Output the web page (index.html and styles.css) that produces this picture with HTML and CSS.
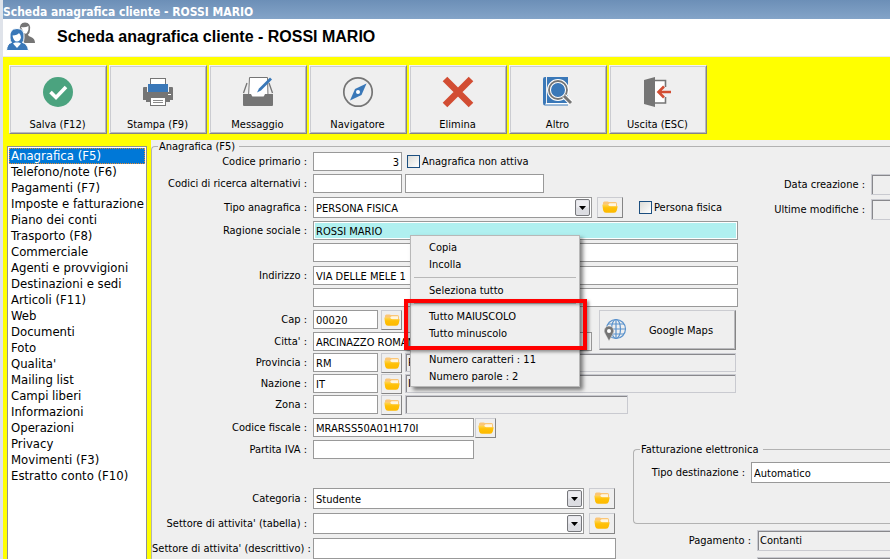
FILE: index.html
```html
<!DOCTYPE html>
<html lang="it">
<head>
    <meta charset="UTF-8">
    <title>Scheda anagrafica cliente</title>

    <link rel="stylesheet" href="styles.css">
</head>
<body>

<svg class="defs" aria-hidden="true">
    <defs>
        <linearGradient id="gold" x1="0" y1="0" x2="0" y2="1">
            <stop offset="0" stop-color="#ffd65a"/>
            <stop offset="0.4" stop-color="#ffc107"/>
            <stop offset="1" stop-color="#fdb900"/>
        </linearGradient>
        <symbol id="folder" viewBox="0 0 16 12">
            <path d="M1 5 V2 Q1 0.5 2.500 0.5 H5.500 L7 1 H13.500 Q15 1 15 3 V6 H1 Z" fill="#fbc676"/>
            <path d="M6 4 L7.500 2.200 H14 V5.500 H7 Z" fill="#fff6e0"/>
            <path d="M0.3 3.500 H5.500 Q7 5.200 8.500 5.200 H15.700 L14.800 9.500 Q14.200 11.800 12 11.800 H4 Q1.800 11.800 1.200 9.500 Z" fill="url(#gold)"/>
        </symbol>
    </defs>
</svg>

<div class="window">
    <div class="titlebar">Scheda anagrafica cliente - ROSSI MARIO</div>

    <header class="header">
        <svg class="header-icon" width="32" height="32" viewBox="0 0 32 32">
            <path d="M14 9 Q13 1.500 19 1.500 Q25 1.500 24 9 Q24 12 22 13.500 Q22 15 25 16 Q29 17.500 29 22 H18 Z" fill="#757575"/>
            <path d="M15 6 Q19 7 22.500 5 Q23 9 21 12 Q19.500 13.500 18 12 Q16 8 15 6 Z" fill="#fff"/>
            <path d="M4 17 Q3 7.500 11 7.500 Q19 7.500 18 17 Q18 20 16.500 21.500 Q21.500 22.500 22.500 29.500 H0.5 Q1 22.500 5.500 21.500 Q4 20 4 17 Z" fill="#3a78b8" stroke="#fff"/>
            <path d="M6.500 14.500 Q11.500 14 13 12 Q15 14 15 16.500 Q14 20.500 11 20.500 Q7.500 20.500 6.500 14.500 Z" fill="#fff"/>
            <path d="M7 22.500 L11 27 L15 22.500 L13 21.500 H9 Z" fill="#fff"/>
        </svg>
        <h1>Scheda anagrafica cliente - ROSSI MARIO</h1>
    </header>

    <div class="toolbar">
        <button type="button" class="tool">
            <svg width="32" height="32" viewBox="0 0 32 32">
                <circle cx="16" cy="16" r="15" fill="#4ba37f"/>
                <path d="M8.500 16 L14 21.500 L24 11" fill="none" stroke="#fff" stroke-width="3.600"/>
            </svg>
            Salva (F12)
        </button>
        <button type="button" class="tool">
            <svg width="32" height="32" viewBox="0 0 32 32">
                <path d="M1 12 Q1 11 2 11 H5 V16 H27 V11 H30 Q31 11 31 12 V24 H1 Z" fill="#757575"/>
                <path d="M4 24 H28 V26 H4 Z" fill="#757575"/>
                <rect x="8.500" y="2.500" width="15" height="7" fill="#fff" stroke="#757575"/>
                <rect x="6" y="8" width="20" height="8" fill="#3a78b8"/>
                <rect x="8.500" y="21.500" width="15" height="8" fill="#fff" stroke="#757575"/>
                <path d="M11 24.500 H21 M11 26.500 H21" stroke="#8a8a8a"/>
                <path d="M26 18.500 H29" stroke="#fff"/>
            </svg>
            Stampa (F9)
        </button>
        <button type="button" class="tool">
            <svg width="32" height="32" viewBox="0 0 32 32">
                <path d="M5 7 L1.500 17 M27 7 L30.500 17" stroke="#757575" stroke-width="1.300"/>
                <path d="M7.500 1.500 H25.500 L26 21 H6.500 Z" fill="#fff" stroke="#757575"/>
                <path d="M1 18 H9 L10.500 21 H21.500 L23 18 H31 V29 Q31 30 30 30 H2 Q1 30 1 29 Z" fill="#757575"/>
                <path d="M15 16.500 L17 12.500 L28 1.500 L30 3.500 L19 14.500 Z" fill="#3a78b8"/>
            </svg>
            Messaggio
        </button>
        <button type="button" class="tool">
            <svg width="32" height="32" viewBox="0 0 32 32">
                <circle cx="16" cy="16" r="14.200" fill="none" stroke="#757575" stroke-width="1.700"/>
                <path d="M24.500 7.500 L19.500 19 L8 24.500 L13 13 Z" fill="#3a78b8"/>
                <circle cx="16" cy="16" r="2" fill="#fff"/>
            </svg>
            Navigatore
        </button>
        <button type="button" class="tool">
            <svg width="32" height="32" viewBox="0 0 32 32">
                <path d="M3 3 L29 29 M29 3 L3 29" stroke="#d24d33" stroke-width="6.500"/>
            </svg>
            Elimina
        </button>
        <button type="button" class="tool">
            <svg width="32" height="32" viewBox="0 0 32 32">
                <path d="M1 3 Q1 1 3 1 H4 V27 H26 V29.500 H3 Q1 29.500 1 27 Z" fill="#3a78b8"/>
                <path d="M4 27 H26 V28.500 H3 Z" fill="#fff"/>
                <rect x="5" y="1" width="21" height="26" fill="#3a78b8"/>
                <circle cx="16" cy="14" r="9" fill="none" stroke="#fff" stroke-width="4"/>
                <circle cx="16" cy="14" r="9" fill="none" stroke="#757575" stroke-width="1.800"/>
                <path d="M22 20 L29 27" stroke="#fff" stroke-width="5"/>
                <path d="M22 20 L29 27" stroke="#757575" stroke-width="3"/>
            </svg>
            Altro
        </button>
        <button type="button" class="tool">
            <svg width="32" height="32" viewBox="0 0 32 32">
                <path d="M13 4.500 H23.500 V27 H13" fill="#fff" stroke="#757575" stroke-width="1.600"/>
                <path d="M2 4 L13 1 V31 L2 28 Z" fill="#757575"/>
                <rect x="21" y="11" width="5" height="10" fill="#efefef"/>
                <path d="M29 16 H16.500 M22 10.500 L16.500 16 L22 21.500" fill="none" stroke="#d24d33" stroke-width="2.600"/>
            </svg>
            Uscita (ESC)
        </button>
    </div>

    <div class="body">
        <nav class="sidebar">
            <ul>
                <li><a href="#" class="selected">Anagrafica (F5)</a></li>
                <li><a href="#">Telefono/note (F6)</a></li>
                <li><a href="#">Pagamenti (F7)</a></li>
                <li><a href="#">Imposte e fatturazione</a></li>
                <li><a href="#">Piano dei conti</a></li>
                <li><a href="#">Trasporto (F8)</a></li>
                <li><a href="#">Commerciale</a></li>
                <li><a href="#">Agenti e provvigioni</a></li>
                <li><a href="#">Destinazioni e sedi</a></li>
                <li><a href="#">Articoli (F11)</a></li>
                <li><a href="#">Web</a></li>
                <li><a href="#">Documenti</a></li>
                <li><a href="#">Foto</a></li>
                <li><a href="#">Qualita'</a></li>
                <li><a href="#">Mailing list</a></li>
                <li><a href="#">Campi liberi</a></li>
                <li><a href="#">Informazioni</a></li>
                <li><a href="#">Operazioni</a></li>
                <li><a href="#">Privacy</a></li>
                <li><a href="#">Movimenti (F3)</a></li>
                <li><a href="#">Estratto conto (F10)</a></li>
            </ul>
        </nav>

        <main class="panel">
            <fieldset class="card">
                <legend>Anagrafica (F5)</legend>

                <div class="columns">
                    <div class="col-left">
                        <div class="group">
                            <div class="row">
                                <label for="codice">Codice primario :</label>
                                <input type="text" id="codice" class="w-code number" value="3">
                                <input type="checkbox" id="nonattiva">
                                <label for="nonattiva" class="check-label">Anagrafica non attiva</label>
                            </div>
                            <div class="row">
                                <label for="alt1">Codici di ricerca alternativi :</label>
                                <input type="text" id="alt1" class="w-code">
                                <input type="text" class="w-alt" aria-label="Codice alternativo 2">
                            </div>
                        </div>
                        <div class="group">
                            <div class="row">
                                <label for="tipo">Tipo anagrafica :</label>
                                <select id="tipo" class="w-type"><option>PERSONA FISICA</option></select>
                                <button type="button" class="browse wide" aria-label="Sfoglia tipo"><svg width="16" height="12"><use href="#folder"/></svg></button>
                                <input type="checkbox" id="fisica" class="spaced">
                                <label for="fisica" class="check-label">Persona fisica</label>
                            </div>
                            <div class="row">
                                <label for="ragione">Ragione sociale :</label>
                                <input type="text" id="ragione" class="w-full active" value="ROSSI MARIO">
                            </div>
                            <div class="row">
                                <span></span>
                                <input type="text" class="w-full" aria-label="Ragione sociale 2">
                            </div>
                        </div>
                        <div class="group">
                            <div class="row">
                                <label for="indirizzo">Indirizzo :</label>
                                <input type="text" id="indirizzo" class="w-full" value="VIA DELLE MELE 1">
                            </div>
                            <div class="row">
                                <span></span>
                                <input type="text" class="w-full" aria-label="Indirizzo 2">
                            </div>
                            <div class="city">
                                <div class="group">
                                    <div class="row">
                                        <label for="cap">Cap :</label>
                                        <input type="text" id="cap" class="w-short" value="00020">
                                        <button type="button" class="browse" aria-label="Sfoglia cap"><svg width="16" height="12"><use href="#folder"/></svg></button>
                                    </div>
                                    <div class="row">
                                        <label for="citta">Citta' :</label>
                                        <input type="text" id="citta" class="w-type" value="ARCINAZZO ROMANO">
                                    </div>
                                </div>
                                <button type="button" class="maps">
                                    <svg width="24" height="24" viewBox="0 0 24 24">
                                        <g fill="none" stroke="#5a92cc" stroke-width="1.200">
                                            <circle cx="13" cy="11" r="9.500"/>
                                            <ellipse cx="13" cy="11" rx="4.500" ry="9.500"/>
                                            <path d="M13 1.500 V20.500 M3.500 11 H22.500 M5 6 H21 M5 16 H21"/>
                                        </g>
                                        <path d="M6 23 L2.500 16.500 Q0 13 2 10 Q3.500 8 6 8 Q8.500 8 10 10 Q12 13 9.500 16.500 Z" fill="#757575" stroke="#efefef" stroke-width="0.500"/>
                                        <circle cx="6" cy="13" r="2" fill="#fff"/>
                                    </svg>
                                    <span>Google Maps</span>
                                </button>
                            </div>
                        </div>
                        <div class="group tight">
                            <div class="row">
                                <label for="provincia">Provincia :</label>
                                <input type="text" id="provincia" class="w-short" value="RM">
                                <button type="button" class="browse" aria-label="Sfoglia provincia"><svg width="16" height="12"><use href="#folder"/></svg></button>
                                <input type="text" class="w-desc" value="ROMA" aria-label="Nome provincia" readonly>
                            </div>
                            <div class="row">
                                <label for="nazione">Nazione :</label>
                                <input type="text" id="nazione" class="w-short" value="IT">
                                <button type="button" class="browse" aria-label="Sfoglia nazione"><svg width="16" height="12"><use href="#folder"/></svg></button>
                                <input type="text" class="w-desc" value="ITALIA" aria-label="Nome nazione" readonly>
                            </div>
                            <div class="row">
                                <label for="zona">Zona :</label>
                                <input type="text" id="zona" class="w-short">
                                <button type="button" class="browse" aria-label="Sfoglia zona"><svg width="16" height="12"><use href="#folder"/></svg></button>
                                <input type="text" class="w-zone" aria-label="Nome zona" readonly>
                            </div>
                        </div>
                    </div>

                    <div class="col-dates">
                        <div class="row">
                            <label for="creazione">Data creazione :</label>
                            <input type="text" id="creazione" class="fill" readonly>
                        </div>
                        <div class="row">
                            <label for="modifiche">Ultime modifiche :</label>
                            <input type="text" id="modifiche" class="fill" readonly>
                        </div>
                    </div>
                </div>

                <div class="columns">
                    <div class="col-left">
                        <div class="group">
                            <div class="row">
                                <label for="cf">Codice fiscale :</label>
                                <input type="text" id="cf" class="w-tax" value="MRARSS50A01H170I">
                                <button type="button" class="browse close" aria-label="Calcola codice fiscale"><svg width="16" height="12"><use href="#folder"/></svg></button>
                            </div>
                            <div class="row">
                                <label for="piva">Partita IVA :</label>
                                <input type="text" id="piva" class="w-tax">
                            </div>
                        </div>
                        <div class="group sector">
                            <div class="row">
                                <label for="categoria">Categoria :</label>
                                <select id="categoria" class="w-cat"><option>Studente</option></select>
                                <button type="button" class="browse wide" aria-label="Sfoglia categoria"><svg width="16" height="12"><use href="#folder"/></svg></button>
                            </div>
                            <div class="row">
                                <label for="settore">Settore di attivita' (tabella) :</label>
                                <select id="settore" class="w-cat"><option></option></select>
                                <button type="button" class="browse wide" aria-label="Sfoglia settore"><svg width="16" height="12"><use href="#folder"/></svg></button>
                            </div>
                            <div class="row">
                                <label for="descrittivo">Settore di attivita' (descrittivo) :</label>
                                <input type="text" id="descrittivo" class="w-sector">
                            </div>
                        </div>
                    </div>

                    <div class="col-billing">
                        <fieldset class="billing">
                            <legend>Fatturazione elettronica</legend>
                            <div class="row">
                                <label for="destinazione">Tipo destinazione :</label>
                                <select id="destinazione" class="fill"><option>Automatico</option></select>
                            </div>
                        </fieldset>
                        <div class="row payment">
                            <label for="pagamento">Pagamento :</label>
                            <input type="text" id="pagamento" class="fill" value="Contanti" readonly>
                        </div>
                        <div class="row payment">
                            <span></span>
                            <input type="text" class="fill" aria-label="Banca" readonly>
                        </div>
                    </div>
                </div>
            </fieldset>
        </main>
    </div>

    <!-- right click menu of the text fields -->
    <div class="context-menu" role="menu">
        <button type="button" role="menuitem">Copia</button>
        <button type="button" role="menuitem">Incolla</button>
        <hr>
        <button type="button" role="menuitem">Seleziona tutto</button>
        <hr>
        <button type="button" role="menuitem">Tutto MAIUSCOLO</button>
        <button type="button" role="menuitem">Tutto minuscolo</button>
        <hr>
        <button type="button" role="menuitem">Numero caratteri : 11</button>
        <button type="button" role="menuitem">Numero parole : 2</button>
    </div>
    <div class="highlight"></div>
</div>

</body>
</html>
```

FILE: styles.css
```css
* {
    box-sizing: border-box;
}

body {
    margin: 0;
    height: 100vh;
    overflow: hidden;
    background: #efefef;
    color: #000;
    font-family: "DejaVu Sans Condensed", "Noto Sans", sans-serif;
    font-size: 11px;
    line-height: 13px;
}

button, input, select {
    margin: 0;
    font: inherit;
    color: inherit;
}

.defs {
    position: absolute;
    width: 0;
    height: 0;
}

.window {
    position: relative;
    display: flex;
    flex-direction: column;
    height: 100vh;
    overflow: hidden;
    border-left: 3px solid #dfe3ea;
}

.titlebar {
    flex: none;
    height: 19px;
    margin-left: -3px;
    padding: 4px 3px 0;
    background: linear-gradient(#6c8fb7, #84a4c8);
    color: #fff;
    font-size: 12px;
    line-height: 16px;
    font-weight: bold;
}

.header {
    display: flex;
    flex: none;
    align-items: center;
    gap: 19px;
    height: 38px;
    padding: 0 0 2px 3px;
    background: #fff;
    border-bottom: 1px solid #ececec;
}

.header h1 {
    margin: 0;
    font-family: "Liberation Sans", Arial, sans-serif;
    font-size: 16px;
    line-height: 20px;
    font-weight: bold;
}

/* Toolbar */

.toolbar {
    display: flex;
    flex: none;
    gap: 2px;
    padding: 8px 6px 6px;
    background: #ff0;
}

.tool {
    display: flex;
    flex-direction: column;
    align-items: center;
    gap: 10px;
    width: 98px;
    height: 69px;
    padding: 10px 1px 0 0;
    background: #efefef;
    border: 1px solid #f4f4f4;
    border-right-color: #858585;
    border-bottom-color: #858585;
    box-shadow: inset 1px 1px #cbccd1, inset -1px -1px #b9b9bd;
}

/* Sidebar */

.body {
    display: flex;
    flex: 1;
    min-height: 0;
    background: #ff0;
}

.sidebar {
    flex: none;
    width: 140px;
    margin: 6px 4px 0 4px;
    padding: 1px;
    background: #fff;
    border: 1px solid #8d9096;
    border-bottom: 0;
}

.sidebar ul {
    margin: 0;
    padding: 0;
    list-style: none;
}

.sidebar a {
    display: block;
    padding-left: 2px;
    font-size: 13px;
    line-height: 16px;
    color: #000;
    text-decoration: none;
    white-space: nowrap;
}

.sidebar a.selected {
    background: #0078d7;
    color: #fff;
    outline: 1px dotted #e88a30;
    outline-offset: -1px;
}

/* Form */

.panel {
    flex: 1;
    min-width: 0;
    background: #efefef;
}

fieldset {
    min-width: 0;
    margin: 0;
    padding: 0;
    border: 1px solid #b2b2b2;
    border-radius: 4px;
}

legend {
    height: 12px;
    margin-left: 6px;
    padding: 0 4px 0 1px;
    line-height: 14px;
}

.card {
    border-width: 1px 0 0 1px;
    border-radius: 4px 0 0 0;
}

.columns {
    display: flex;
}

.columns + .columns {
    margin-top: 4px;
}

.col-left, .group {
    display: flex;
    flex-direction: column;
    gap: 4px;
}

.col-left {
    flex: none;
}

.group {
    gap: 3px;
}

.group.tight {
    gap: 2px;
    margin-top: -2px;
}

.group.sector {
    gap: 4px;
    margin-top: 25px;
}

.row {
    display: flex;
    align-items: center;
}

.row > label:first-child, .row > span:first-child {
    flex: none;
    width: 155px;
    margin-right: 6px;
    text-align: right;
    white-space: nowrap;
}

.row input[type="text"] {
    height: 19px;
    padding: 1px 2px 0;
    background: #fff;
    border: 1px solid #999;
    border-radius: 0;
}

.row input.number {
    text-align: right;
}

.row input.active {
    background: #b0f0f0;
    box-shadow: inset 0 0 0 1px #fff;
}

.row input[readonly] {
    padding: 0 2px;
    background: #efefef;
    border-color: #c9cad0;
    box-shadow: inset 1px 1px #88888c;
}

.row select {
    height: 21px;
    padding: 1px 20px 0 2px;
    appearance: none;
    border: 1px solid #999;
    border-radius: 0;
    background: #fff url("data:image/svg+xml,%3Csvg xmlns='http://www.w3.org/2000/svg' width='15' height='17'%3E%3Crect x='.5' y='.5' width='14' height='16' rx='1.500' fill='%23dcdde2' stroke='%2377787c'/%3E%3Crect x='1.500' y='1.500' width='12' height='7' fill='%23ededf1'/%3E%3Cpath d='M4 7h7l-3.500 4z'/%3E%3C/svg%3E") no-repeat right 1px center;
}

.row input[type="checkbox"] {
    appearance: none;
    width: 13px;
    height: 13px;
    margin: 0 2px 0 5px;
    border: 1px solid #1c4f80;
    background: linear-gradient(135deg, #dcdcd7, #fff);
}

.row input.spaced {
    margin-left: 16px;
}

.check-label {
    white-space: nowrap;
}

.browse {
    display: flex;
    align-items: center;
    justify-content: center;
    width: 21px;
    height: 20px;
    margin: 0 3px 0 3px;
    padding: 0 0 1px;
    background: #efefef;
    border: 1px solid #cbccd1;
    border-right-color: #858585;
    border-bottom-color: #858585;
}

.row .browse {
    margin-bottom: -1px;
}

.browse.wide {
    width: 26px;
    height: 21px;
    margin: 0 0 0 5px;
}

.browse.close {
    margin-left: 1px;
}

.w-code { width: 89px; }
.w-alt { width: 139px; margin-left: 3px; }
.w-type { width: 279px; }
.w-full { width: 425px; }
.w-short { width: 65px; }
.w-desc { width: 331px; }
.w-zone { width: 223px; }
.w-tax { width: 161px; }
.w-cat { width: 271px; }
.w-sector { width: 303px; }

.row input.w-sector {
    height: 21px;
}

.city {
    display: flex;
}

.maps {
    display: flex;
    align-items: center;
    width: 137px;
    height: 40px;
    margin-left: 7px;
    padding: 0 0 0 3px;
    background: #efefef;
    border: 1px solid #cbccd1;
    border-right-color: #858585;
    border-bottom-color: #858585;
    box-shadow: inset -1px -1px #b9b9bd;
}

.maps span {
    flex: 1;
    text-align: center;
}

.col-dates, .col-billing {
    display: flex;
    flex: 1;
    flex-direction: column;
    min-width: 0;
}

.col-dates {
    gap: 4px;
    padding-top: 22px;
}

.col-dates .row > label:first-child {
    width: 127px;
}

.row input.fill, .row select.fill {
    flex: 1;
    width: 0;
    min-width: 0;
    height: 21px;
    border-right: 0;
}

/* text only, the arrow stays past the window edge */
.row select.fill {
    background-image: none;
}

.col-billing {
    gap: 6px;
    margin: 25px 0 0 17px;
}

.billing {
    height: 81px;
    border-right: 0;
    border-radius: 4px 0 0 4px;
}

.billing .row {
    padding-top: 7px;
}

.billing .row > label:first-child {
    width: 111px;
}

.row.payment > label:first-child, .row.payment > span:first-child {
    width: 118px;
}

/* Context menu, over the fields */

.context-menu {
    position: absolute;
    left: 407px;
    top: 235px;
    width: 170px;
    padding: 3px 3px 1px;
    background: #efefef;
    border: 1px solid #b8b8b8;
    box-shadow: 3px 3px 4px rgba(0, 0, 0, 0.5);
}

.context-menu button {
    display: block;
    width: 100%;
    height: 17px;
    padding: 0 0 0 15px;
    background: none;
    border: 0;
    text-align: left;
    white-space: nowrap;
}

.context-menu hr {
    height: 1px;
    margin: 4px 0;
    border: 0;
    background: #b8b8b8;
}

.highlight {
    position: absolute;
    left: 401px;
    top: 299px;
    width: 183px;
    height: 51px;
    border: 4px solid #f00;
    box-shadow: 2px 2px 3px rgba(0, 0, 0, 0.4), inset 2px 2px 3px rgba(0, 0, 0, 0.3);
    pointer-events: none;
}
```
